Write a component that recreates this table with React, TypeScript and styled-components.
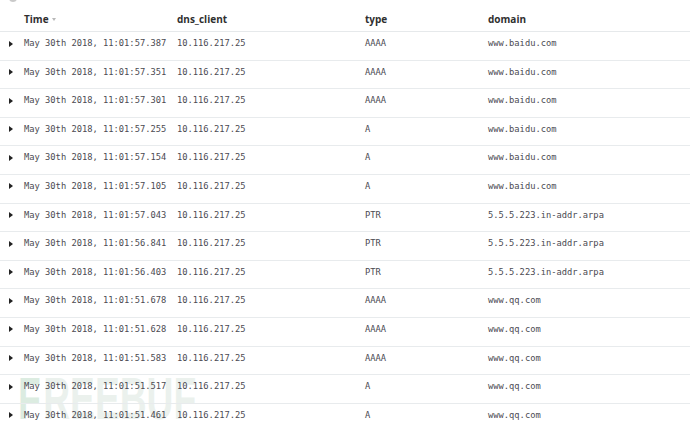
import React from 'react'
import styled, { createGlobalStyle } from 'styled-components'

const GlobalStyle = createGlobalStyle`
  html, body {
    margin: 0;
    padding: 0;
    background: #fff;
  }
  body {
    font-family: "Open Sans", "Liberation Sans", sans-serif;
    overflow: hidden;
  }
`

const Page = styled.div`
  position: relative;
  width: 690px;
  height: 422px;
  overflow: hidden;
  background: #fff;
`

const TopStrip = styled.div`
  height: 4px;
  position: relative;
  overflow: hidden;
`

const CutIcon = styled.div`
  position: absolute;
  left: 9px;
  top: -6px;
  width: 8px;
  height: 8px;
  border-radius: 50%;
  background: #c9c9c9;
`

const GRID = '24px 153px 188px 123px 1fr'

const HeadRow = styled.div`
  display: grid;
  grid-template-columns: ${GRID};
  align-items: center;
  height: 28px;
  border-bottom: 1px solid #e6e9eb;
  box-sizing: border-box;
`

const HeadCell = styled.div`
  display: flex;
  align-items: center;
  gap: 3px;
  font-weight: 700;
  font-size: 10px;
  color: #2f2f2f;
  padding-top: 2px;
`

const SortCaret = styled.span`
  width: 0;
  height: 0;
  margin-top: 2px;
  border-left: 2.5px solid transparent;
  border-right: 2.5px solid transparent;
  border-top: 3px solid #b8b8b8;
`

const Row = styled.div`
  display: grid;
  grid-template-columns: ${GRID};
  align-items: start;
  height: 28.6px;
  padding-top: 6px;
  box-sizing: border-box;
  border-bottom: 1px solid #e8ebed;
  position: relative;
  z-index: 1;
`

const Cell = styled.div`
  font-family: "DejaVu Sans Mono", "Liberation Mono", monospace;
  font-size: 8.75px;
  line-height: 11px;
  color: #4b4a52;
  white-space: nowrap;
`

const Expand = styled.div`
  display: flex;
  align-items: center;
  height: 11px;
  padding-left: 9px;
`

const Triangle = styled.span`
  width: 0;
  height: 0;
  border-top: 3px solid transparent;
  border-bottom: 3px solid transparent;
  border-left: 4px solid #222;
`

const Watermark = styled.div`
  position: absolute;
  left: 18px;
  top: 364px;
  display: flex;
  align-items: flex-start;
  font-family: "Liberation Sans", "Open Sans", sans-serif;
  font-weight: 700;
  font-size: 60px;
  line-height: 70px;
  color: rgba(226, 236, 230, 0.7);
  z-index: 0;
  pointer-events: none;
  transform: scaleX(0.62);
  transform-origin: left top;
`

const MarkF = styled.span`
  color: rgba(205, 228, 212, 0.7);
  margin-right: 4px;
`

type Doc = { time: string; client: string; type: string; domain: string }

const docs: Doc[] = [
  ['57.387', 'AAAA', 'www.baidu.com'],
  ['57.351', 'AAAA', 'www.baidu.com'],
  ['57.301', 'AAAA', 'www.baidu.com'],
  ['57.255', 'A', 'www.baidu.com'],
  ['57.154', 'A', 'www.baidu.com'],
  ['57.105', 'A', 'www.baidu.com'],
  ['57.043', 'PTR', '5.5.5.223.in-addr.arpa'],
  ['56.841', 'PTR', '5.5.5.223.in-addr.arpa'],
  ['56.403', 'PTR', '5.5.5.223.in-addr.arpa'],
  ['51.678', 'AAAA', 'www.qq.com'],
  ['51.628', 'AAAA', 'www.qq.com'],
  ['51.583', 'AAAA', 'www.qq.com'],
  ['51.517', 'A', 'www.qq.com'],
  ['51.461', 'A', 'www.qq.com'],
].map(([sec, type, domain]) => ({
  time: `May 30th 2018, 11:01:${sec}`,
  client: '10.116.217.25',
  type,
  domain,
}))

export default function App() {
  return (
    <Page>
      <GlobalStyle />
      <TopStrip>
        <CutIcon />
      </TopStrip>
      <HeadRow>
        <div />
        <HeadCell>
          Time <SortCaret />
        </HeadCell>
        <HeadCell>dns_client</HeadCell>
        <HeadCell>type</HeadCell>
        <HeadCell>domain</HeadCell>
      </HeadRow>
      {docs.map((d, i) => (
        <Row key={i}>
          <Expand>
            <Triangle />
          </Expand>
          <Cell>{d.time}</Cell>
          <Cell>{d.client}</Cell>
          <Cell>{d.type}</Cell>
          <Cell>{d.domain}</Cell>
        </Row>
      ))}
      <Watermark aria-hidden="true">
        <MarkF>F</MarkF>REEBUF
      </Watermark>
    </Page>
  )
}
